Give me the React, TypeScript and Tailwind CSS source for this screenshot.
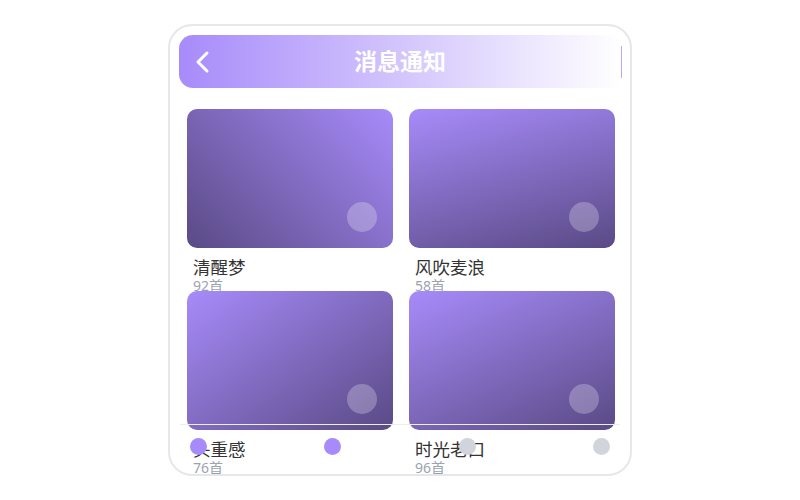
import React from 'react';

interface Playlist {
  name: string;
  count: number;
  gradient: string;
}

const playlists: Playlist[] = [
  { name: '清醒梦', count: 92, gradient: 'bg-[linear-gradient(225deg,#a78bfa_0%,#5a4a85_100%)]' },
  { name: '风吹麦浪', count: 58, gradient: 'bg-[linear-gradient(165deg,#a78bfa_0%,#5a4a85_100%)]' },
  { name: '头重感', count: 76, gradient: 'bg-[linear-gradient(145deg,#a78bfa_0%,#5a4a85_100%)]' },
  { name: '时光老口', count: 96, gradient: 'bg-[linear-gradient(155deg,#a78bfa_0%,#5a4a85_100%)]' },
];

const tabs = [true, true, false, false];

const PlaylistCard: React.FC<{ item: Playlist }> = ({ item }) => (
  <div className="h-[182px]">
    <div className={`relative h-[139px] rounded-[10px] ${item.gradient}`}>
      <div className="absolute right-4 bottom-4 h-[30px] w-[30px] rounded-full bg-white/25" />
    </div>
    <div className="mt-[9px] px-[6px]">
      <div className="text-[17.5px] leading-[21px] text-[#333]">{item.name}</div>
      <div className="text-[14px] leading-[16px] text-[#9ca3af]">{item.count}首</div>
    </div>
  </div>
);

export default function App() {
  return (
    <div
      className="flex h-[500px] w-[800px] items-center justify-center bg-white"
      style={{ fontFamily: '"Noto Sans", "Noto Sans CJK SC", sans-serif' }}
    >
      <div className="relative h-[452px] w-[464px] overflow-hidden rounded-[24px] border-2 border-[#e5e7eb] bg-white">
        <div className="mt-[9px] ml-[9px] mr-[8px] flex h-[53px] items-center rounded-[14px] bg-[linear-gradient(90deg,#a78bfa_0%,#ffffff_100%)] pl-[16px]">
          <svg width="16" height="24" viewBox="0 0 16 24" fill="none" className="shrink-0">
            <path d="M12 3 L3 12 L12 21" stroke="white" strokeWidth="3" strokeLinecap="round" strokeLinejoin="round" />
          </svg>
          <div className="-ml-[32px] flex-1 text-center text-[23px] font-bold text-white">消息通知</div>
          <div className="h-[32px] w-px bg-[#b9a5fb]" />
        </div>

        <div className="mt-[21px] grid grid-cols-2 gap-x-4 pl-[17px] pr-[15px]">
          {playlists.map((p) => (
            <PlaylistCard key={p.name} item={p} />
          ))}
        </div>

        <div className="absolute right-[10px] bottom-0 left-[10px] flex h-[50px] items-start justify-between border-t border-[#eeeeee] px-[10px] pt-[13px]">
          {tabs.map((active, i) => (
            <div
              key={i}
              className={`h-[17px] w-[17px] rounded-full ${active ? 'bg-[#a78bfa]' : 'bg-[#d1d5db]'}`}
            />
          ))}
        </div>
      </div>
    </div>
  );
}
